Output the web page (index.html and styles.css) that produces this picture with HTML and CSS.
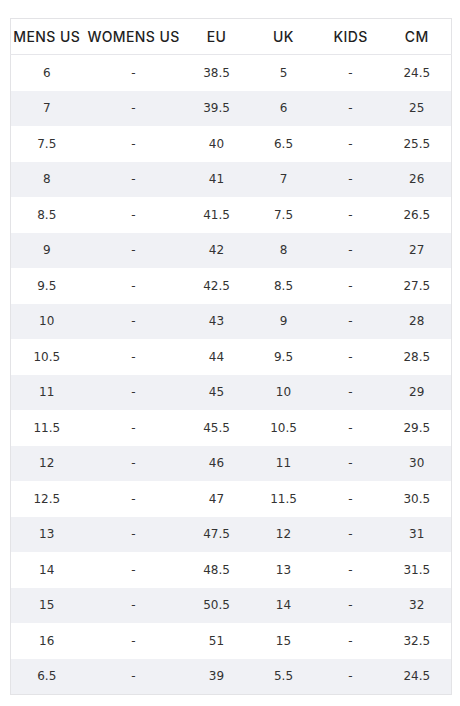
FILE: index.html
```html
<!DOCTYPE html>
<html>
<head>
<meta charset="utf-8">
<link rel="stylesheet" href="styles.css">
</head>
<body>
<div class="wrap">
<table class="size-table">
<colgroup>
<col class="c1"><col class="c2"><col class="c3"><col class="c4"><col class="c5"><col class="c6">
</colgroup>
<thead>
<tr><th>MENS US</th><th>WOMENS US</th><th>EU</th><th>UK</th><th>KIDS</th><th>CM</th></tr>
</thead>
<tbody>
<tr><td>6</td><td>-</td><td>38.5</td><td>5</td><td>-</td><td>24.5</td></tr>
<tr><td>7</td><td>-</td><td>39.5</td><td>6</td><td>-</td><td>25</td></tr>
<tr><td>7.5</td><td>-</td><td>40</td><td>6.5</td><td>-</td><td>25.5</td></tr>
<tr><td>8</td><td>-</td><td>41</td><td>7</td><td>-</td><td>26</td></tr>
<tr><td>8.5</td><td>-</td><td>41.5</td><td>7.5</td><td>-</td><td>26.5</td></tr>
<tr><td>9</td><td>-</td><td>42</td><td>8</td><td>-</td><td>27</td></tr>
<tr><td>9.5</td><td>-</td><td>42.5</td><td>8.5</td><td>-</td><td>27.5</td></tr>
<tr><td>10</td><td>-</td><td>43</td><td>9</td><td>-</td><td>28</td></tr>
<tr><td>10.5</td><td>-</td><td>44</td><td>9.5</td><td>-</td><td>28.5</td></tr>
<tr><td>11</td><td>-</td><td>45</td><td>10</td><td>-</td><td>29</td></tr>
<tr><td>11.5</td><td>-</td><td>45.5</td><td>10.5</td><td>-</td><td>29.5</td></tr>
<tr><td>12</td><td>-</td><td>46</td><td>11</td><td>-</td><td>30</td></tr>
<tr><td>12.5</td><td>-</td><td>47</td><td>11.5</td><td>-</td><td>30.5</td></tr>
<tr><td>13</td><td>-</td><td>47.5</td><td>12</td><td>-</td><td>31</td></tr>
<tr><td>14</td><td>-</td><td>48.5</td><td>13</td><td>-</td><td>31.5</td></tr>
<tr><td>15</td><td>-</td><td>50.5</td><td>14</td><td>-</td><td>32</td></tr>
<tr><td>16</td><td>-</td><td>51</td><td>15</td><td>-</td><td>32.5</td></tr>
<tr><td>6.5</td><td>-</td><td>39</td><td>5.5</td><td>-</td><td>24.5</td></tr>
</tbody>
</table>
</div>
</body>
</html>
```
FILE: styles.css
```css
html, body {
  margin: 0;
  padding: 0;
  background: #ffffff;
}
.wrap {
  padding: 18px 9px 0 10px;
}
.size-table {
  border-collapse: collapse;
  table-layout: fixed;
  width: 441px;
  border: 1px solid #e3e3e6;
  color: #2b2b2b;
}
.c1 { width: 72px; }
.c2 { width: 102px; }
.c3 { width: 64px; }
.c4 { width: 70px; }
.c5 { width: 64px; }
.c6 { width: 69px; }
.size-table th {
  font-family: Inter, "Open Sans", sans-serif;
  font-weight: 500;
  font-size: 14px;
  letter-spacing: 0.4px;
  height: 35px;
  padding: 0;
  text-align: center;
  white-space: nowrap;
  border-bottom: 1px solid #e6e6ea;
  color: #1f1f1f;
}
.size-table td {
  font-family: "DejaVu Sans", Verdana, sans-serif;
  font-size: 12px;
  height: 35.5px;
  padding: 0;
  text-align: center;
  color: #333333;
}
.size-table tbody tr:nth-child(even) td {
  background: #f0f1f5;
}
```
